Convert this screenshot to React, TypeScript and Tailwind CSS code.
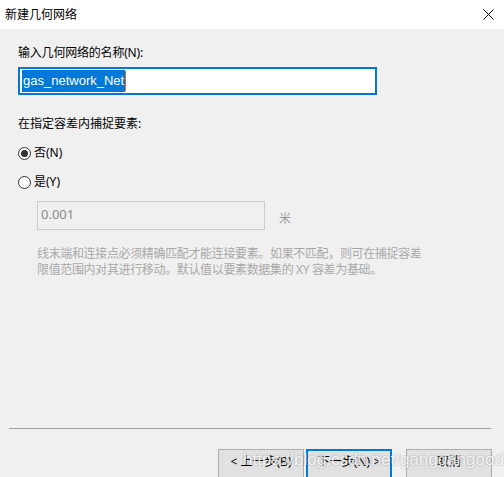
import React from 'react';

const FONT = { fontFamily: '"Noto Sans", "Noto Sans CJK SC", sans-serif' };

function Radio({ checked, label }: { checked: boolean; label: string }) {
  return (
    <div className="flex items-center h-4 gap-[3px]">
      <span className="w-[13px] h-[13px] rounded-full border border-[#333] bg-white flex items-center justify-center">
        {checked && <span className="w-[7px] h-[7px] rounded-full bg-[#333]" />}
      </span>
      <span className="text-[12px] text-black leading-4">{label}</span>
    </div>
  );
}

export default function App() {
  return (
    <div className="relative w-[504px] h-[477px] overflow-hidden bg-[#f0f0f0]" style={FONT}>
      {/* Title bar */}
      <div className="h-[29px] bg-white flex items-center justify-between pl-[5px] pr-[10px]">
        <span className="text-[12px] text-black">新建几何网络</span>
        <svg width="11" height="11" viewBox="0 0 11 11" className="text-black">
          <path d="M0.5 0.5 L10.5 10.5 M10.5 0.5 L0.5 10.5" stroke="currentColor" strokeWidth="1" />
        </svg>
      </div>

      {/* Content */}
      <div className="pl-[18px] pt-[16px]">
        <div className="text-[12px] leading-4 text-black tracking-[-0.2px]">输入几何网络的名称(N):</div>
        <div className="mt-[6px] w-[359px] h-[28px] border-2 border-[#0078d7] bg-white flex items-center px-[2px]">
          <span
            className="bg-[#0078d7] text-white text-[13px] leading-[22px] px-[1px]"
            style={{ fontFamily: '"Liberation Sans", Arial, sans-serif' }}
          >
            gas_network_Net
          </span>
          <span className="w-px h-[20px] bg-[#e07020]" />
        </div>

        <div className="mt-[21px] text-[12px] leading-4 text-black">在指定容差内捕捉要素:</div>
        <div className="mt-[13px]">
          <Radio checked label="否(N)" />
        </div>
        <div className="mt-[13px]">
          <Radio checked={false} label="是(Y)" />
        </div>

        <div className="mt-[11px] ml-[19px] flex items-center">
          <div className="w-[228px] h-[29px] border border-[#cccccc] bg-[#f0f0f0] flex items-start pt-[3px] pl-[3px]">
            <span className="text-[13px] text-[#8a8a8a]">0.001</span>
          </div>
          <span className="ml-[14px] mt-[6px] text-[12px] text-[#a0a0a0]">米</span>
        </div>

        <div className="mt-[16px] ml-[19px] w-[420px] text-[12px] leading-4 text-[#a8a8a8] tracking-[-0.35px]">
          <div>线末端和连接点必须精确匹配才能连接要素。如果不匹配，则可在捕捉容差</div>
          <div>限值范围内对其进行移动。默认值以要素数据集的 XY 容差为基础。</div>
        </div>
      </div>

      {/* Separator */}
      <div className="absolute left-[9px] top-[428px] w-[482px] h-[2px] border-t border-[#a0a0a0] border-b-white" />

      {/* Buttons */}
      <div className="absolute left-[218px] top-[449px] flex">
        <button className="w-[86px] h-[30px] border border-[#adadad] bg-[#e1e1e1] text-[12px] text-black pb-[5px]">
          &lt; 上一步(B)
        </button>
        <button className="ml-[2px] w-[86px] h-[30px] border-2 border-[#0078d7] bg-[#e1e1e1] text-[12px] text-black pb-[5px]">
          下一步(N) &gt;
        </button>
        <button className="ml-[14px] w-[86px] h-[30px] border border-[#adadad] bg-[#e1e1e1] text-[12px] text-black pb-[5px]">
          取消
        </button>
      </div>

      {/* Watermark */}
      <div
        className="absolute left-[243px] top-[450px] text-[17px] leading-5 text-white/85 pointer-events-none"
        style={{ fontFamily: '"Liberation Sans", Arial, sans-serif', textShadow: '0 0 2px rgba(0,0,0,0.35)' }}
      >
        https://blog.csdn.net/ganggangood
      </div>
    </div>
  );
}
